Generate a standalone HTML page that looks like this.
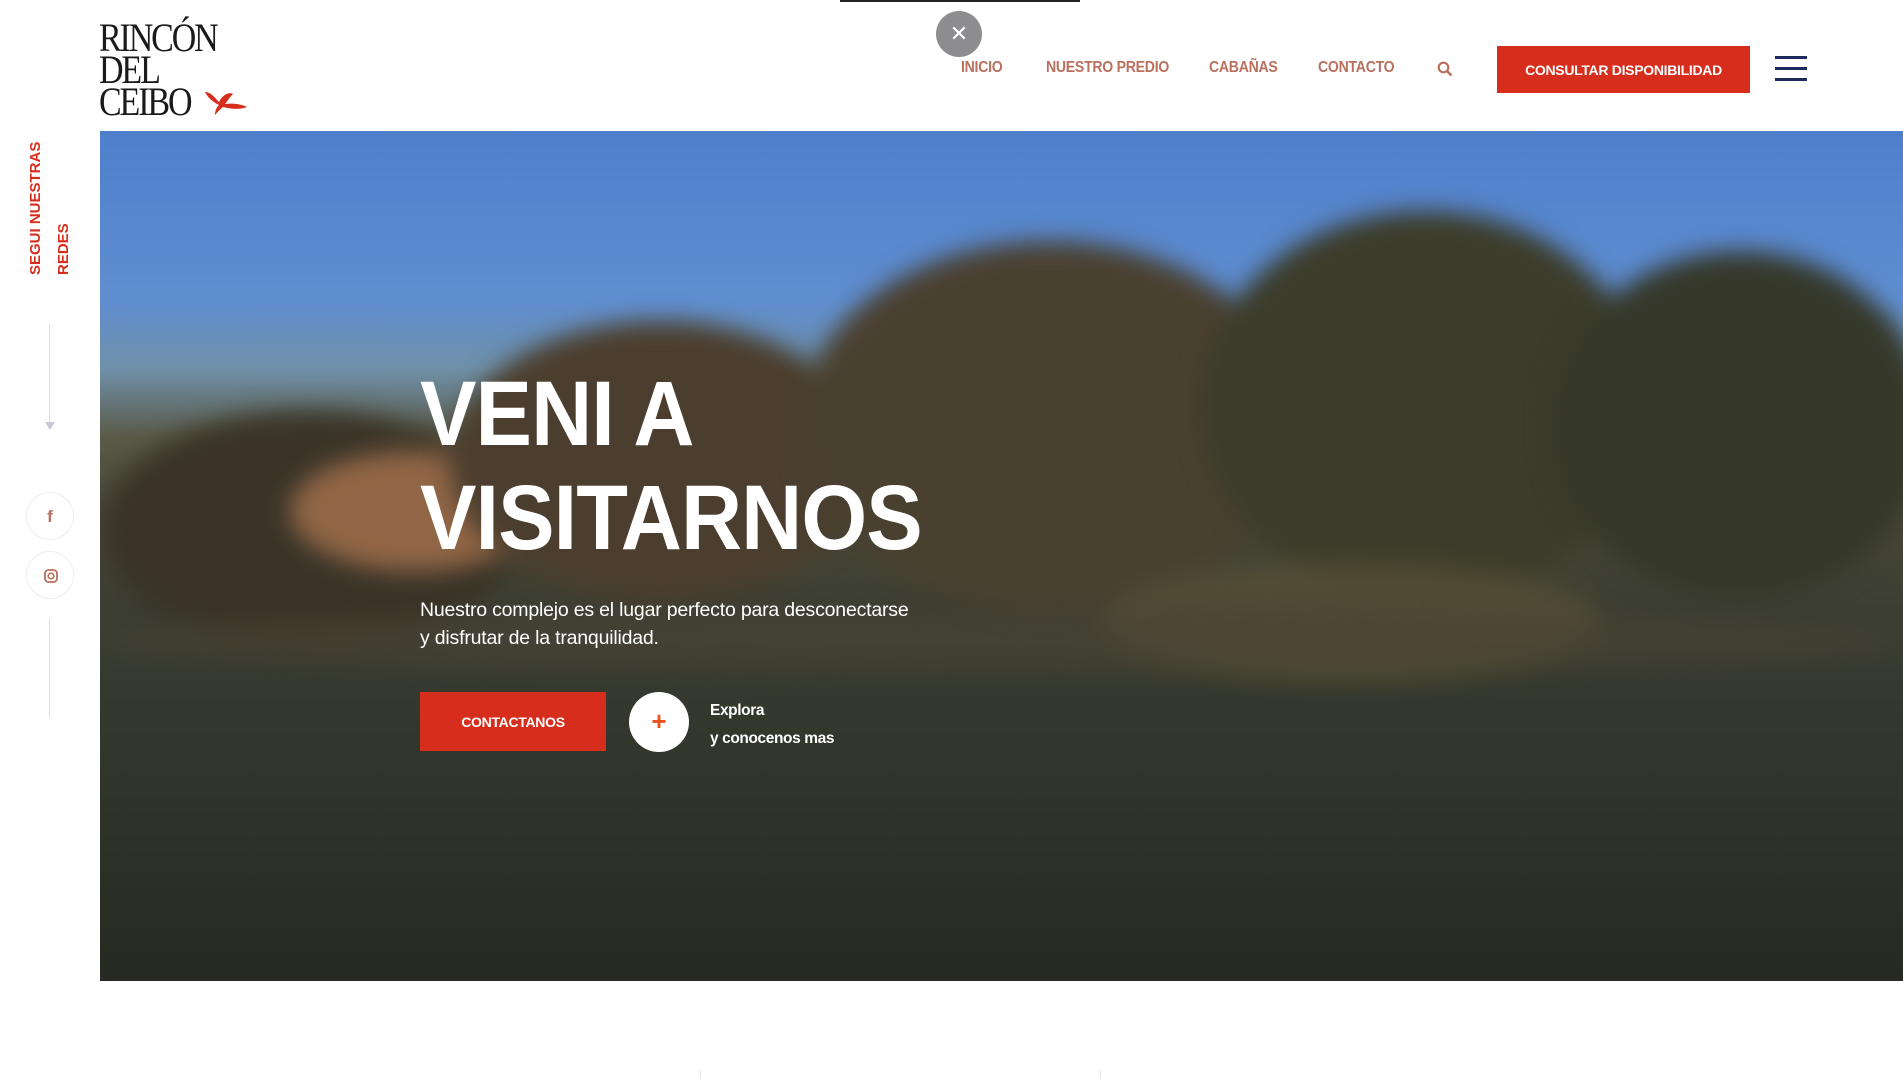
<!DOCTYPE html>
<html><head><meta charset="utf-8"><style>
*{margin:0;padding:0;box-sizing:border-box}
body{width:1903px;height:1079px;overflow:hidden;background:#fff;font-family:"Liberation Sans",sans-serif;position:relative}
.abs{position:absolute}
.logo{left:99px;top:22px;font-family:"Liberation Serif",serif;color:#1a1a1a;font-size:40px;line-height:32px;letter-spacing:-2.5px;transform:scaleX(.85);transform-origin:left}
.nav a{position:absolute;top:59px;color:#b9705e;font-weight:bold;font-size:16px;text-decoration:none;letter-spacing:-.3px;transform:scaleX(.88);transform-origin:left}
.btn{background:#d62d1c;color:#fff;font-weight:bold;display:flex;align-items:center;justify-content:center;letter-spacing:-.3px}
.hero{left:100px;top:131px;width:1803px;height:850px;overflow:hidden;
background:linear-gradient(180deg,#4f7fcc 0%,#5f8ed0 20%,#6f90a8 28%,#5a5a48 36%,#4a4a3a 44%,#3d3f33 55%,#33372c 70%,#262a22 100%)}
.blob{position:absolute;border-radius:50%;filter:blur(12px)}
h1{position:absolute;left:420px;top:362px;color:#fff;font-size:92px;line-height:104px;font-weight:bold;letter-spacing:-1px;transform:scaleX(.92);transform-origin:left}
</style></head><body>
<div class="abs" style="left:840px;top:0;width:240px;height:2px;background:#222"></div>
<div class="abs logo">RINCÓN<br>DEL<br>CEIBO</div>
<svg class="abs" style="left:203px;top:88px" width="45" height="28" viewBox="0 0 45 28"><path d="M2 4 C8 4 12 10 16 14 C20 6 26 4 30 6 C26 10 24 14 22 16 C30 15 38 16 44 19 C36 22 28 21 20 19 C16 22 14 25 12 27 C12 22 14 19 16 17 C10 14 5 10 2 4Z" fill="#d62d1c"/></svg>
<div class="abs" style="left:936px;top:11px;width:46px;height:46px;border-radius:50%;background:#8d8d8f;color:#fff;font-size:22px;text-align:center;line-height:46px">✕</div>
<div class="nav"><a style="left:961px">INICIO</a><a style="left:1046px">NUESTRO PREDIO</a><a style="left:1209px">CABAÑAS</a><a style="left:1318px">CONTACTO</a></div>
<svg class="abs" style="left:1437px;top:61px" width="16" height="16" viewBox="0 0 16 16"><circle cx="6.5" cy="6.5" r="4.8" fill="none" stroke="#b9705e" stroke-width="2.2"/><path d="M10 10l4.5 4.5" stroke="#b9705e" stroke-width="2.4"/></svg>
<div class="abs btn" style="left:1497px;top:46px;width:253px;height:47px;font-size:14px">CONSULTAR DISPONIBILIDAD</div>
<div class="abs" style="left:1775px;top:56px;width:32px;height:3px;background:#1d2a5a"></div>
<div class="abs" style="left:1775px;top:67px;width:32px;height:3px;background:#1d2a5a"></div>
<div class="abs" style="left:1775px;top:78px;width:32px;height:3px;background:#1d2a5a"></div>
<div class="abs" style="left:22px;top:275px;transform:rotate(-90deg);transform-origin:0 0;color:#d62d1c;font-weight:bold;font-size:15px;line-height:28px;white-space:nowrap;text-align:left;width:130px">SEGUI NUESTRAS<br>REDES</div>
<div class="abs" style="left:49px;top:324px;width:1px;height:98px;background:#ddd"></div>
<div class="abs" style="left:45px;top:422px;border-left:5px solid transparent;border-right:5px solid transparent;border-top:8px solid #c8c8d8"></div>
<div class="abs" style="left:26px;top:492px;width:48px;height:48px;border-radius:50%;border:1px solid #eee;color:#b9705e;font-weight:bold;text-align:center;line-height:48px;font-size:17px">f</div>
<div class="abs" style="left:26px;top:551px;width:48px;height:48px;border-radius:50%;border:1px solid #eee"><svg style="position:absolute;left:17px;top:17px" width="14" height="14" viewBox="0 0 14 14"><rect x="1" y="1" width="12" height="12" rx="3.5" fill="none" stroke="#b9705e" stroke-width="1.8"/><circle cx="7" cy="7" r="2.8" fill="none" stroke="#b9705e" stroke-width="1.6"/></svg></div>
<div class="abs" style="left:49px;top:619px;width:1px;height:98px;background:#ddd"></div>
<div class="abs hero">
<div class="blob" style="left:0;top:280px;width:420px;height:240px;background:#3a3428"></div>
<div class="blob" style="left:190px;top:320px;width:250px;height:120px;background:#a7734e;opacity:.8"></div>
<div class="blob" style="left:350px;top:190px;width:420px;height:280px;background:#4b3e2e"></div>
<div class="blob" style="left:700px;top:110px;width:500px;height:370px;background:#4a4030"></div>
<div class="blob" style="left:1100px;top:80px;width:450px;height:390px;background:#3c3c2a"></div>
<div class="blob" style="left:1450px;top:120px;width:380px;height:350px;background:#36382a"></div>
<div class="blob" style="left:1000px;top:430px;width:500px;height:120px;background:#5d5436;opacity:.6"></div>
<div class="blob" style="left:0;top:480px;width:1803px;height:60px;background:#4a4436;opacity:.6"></div>
</div>
<h1>VENI A<br>VISITARNOS</h1>
<div class="abs" style="left:420px;top:596px;color:#fff;font-size:19.5px;line-height:28px;letter-spacing:-.2px">Nuestro complejo es el lugar perfecto para desconectarse<br>y disfrutar de la tranquilidad.</div>
<div class="abs btn" style="left:420px;top:692px;width:186px;height:59px;font-size:14px">CONTACTANOS</div>
<div class="abs" style="left:629px;top:692px;width:60px;height:60px;border-radius:50%;background:#fff;color:#e8531f;font-size:26px;font-weight:bold;text-align:center;line-height:58px">+</div>
<div class="abs" style="left:710px;top:697px;color:#fff;font-weight:bold;font-size:15.5px;line-height:28px;letter-spacing:-.4px">Explora<br>y conocenos mas</div>
<div class="abs" style="left:1100px;top:1070px;width:1px;height:9px;background:#e5e5e5"></div>
<div class="abs" style="left:700px;top:1070px;width:1px;height:9px;background:#e5e5e5"></div>
</body></html>
